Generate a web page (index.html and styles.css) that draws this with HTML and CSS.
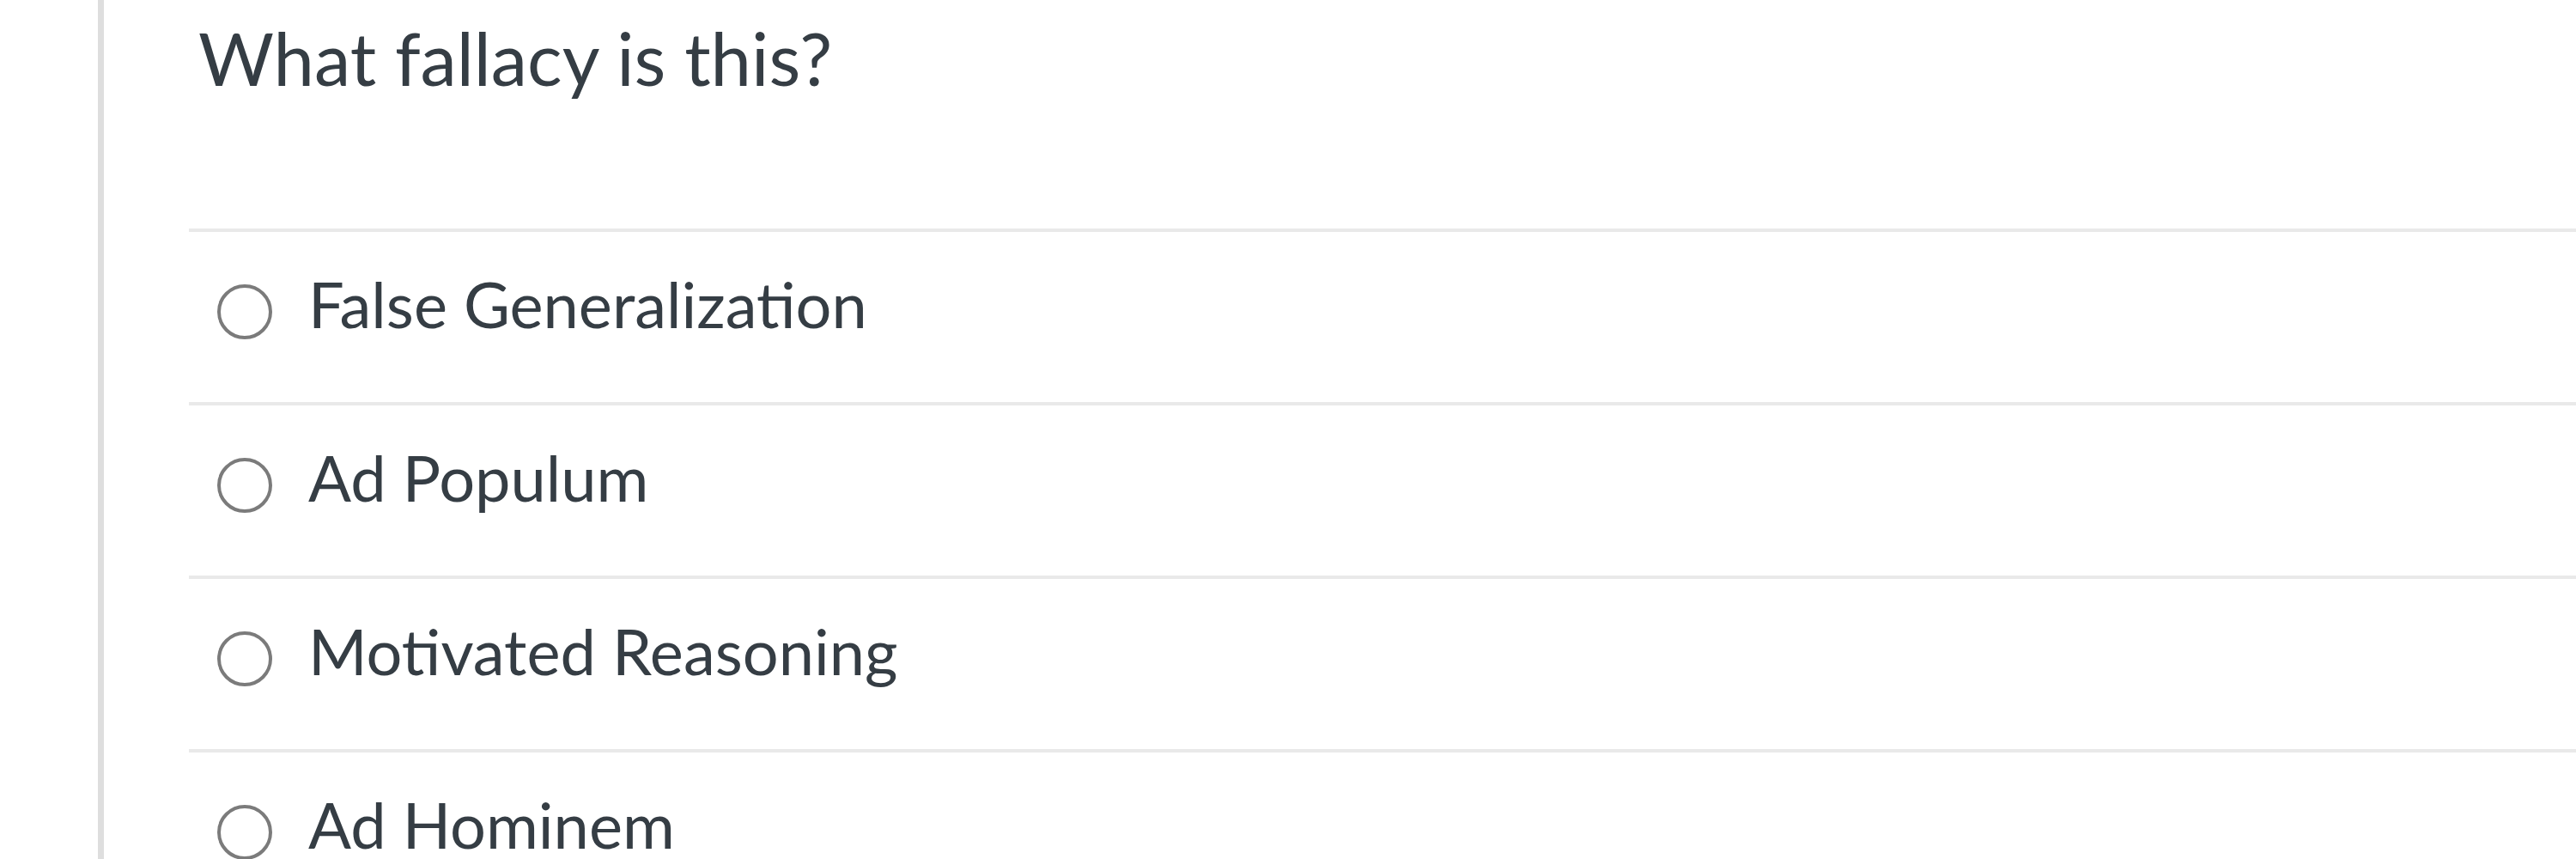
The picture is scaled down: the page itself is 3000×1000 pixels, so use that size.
FILE: index.html
```html
<!DOCTYPE html>
<html>
<head>
    <meta charset="utf-8">
    <title>Quiz question</title>
    <link rel="stylesheet" href="styles.css">
</head>
<body>

    <div class="question">
        <p class="question-text">What fallacy is this?</p>

        <form action="#" class="answers">
            <label class="answer">
                <input type="radio" name="fallacy" value="false-generalization"> <span>False Generalization</span>
            </label>
            <label class="answer">
                <input type="radio" name="fallacy" value="ad-populum"> <span>Ad Populum</span>
            </label>
            <label class="answer">
                <input type="radio" name="fallacy" value="motivated-reasoning"> <span>Motivated Reasoning</span>
            </label>
            <label class="answer">
                <input type="radio" name="fallacy" value="ad-hominem"> <span>Ad Hominem</span>
            </label>
        </form>
    </div>

</body>
</html>
```

FILE: styles.css
```css
        body {
            margin: 0;
            font-family: Lato, "Open Sans", sans-serif;
            background-color: #fff;
            color: #353d44;
            overflow: hidden;
        }

        .question {
            margin-left: 114px;
            border-left: 7px solid #dedede;
            padding-left: 99px;
            height: 1000px;
        }

        .question-text {
            margin: 0;
            padding: 16px 0 0 11px;
            font-size: 85px;
            line-height: 1.2;
            height: 250px;
        }

        .answers {
            margin: 0;
        }

        .answer {
            display: flex;
            align-items: center;
            border-top: 4px solid #e9e9e9;
            height: 168px;
            padding: 0 0 30px 33px;
            font-size: 74px;
            line-height: 1.2;
        }

        .answer input {
            appearance: none;
            -webkit-appearance: none;
            box-sizing: border-box;
            width: 64px;
            height: 64px;
            margin: 18px 42px 0 0;
            border: 4px solid #7b7b7b;
            border-radius: 50%;
            background: #fff;
            flex-shrink: 0;
        }
```
